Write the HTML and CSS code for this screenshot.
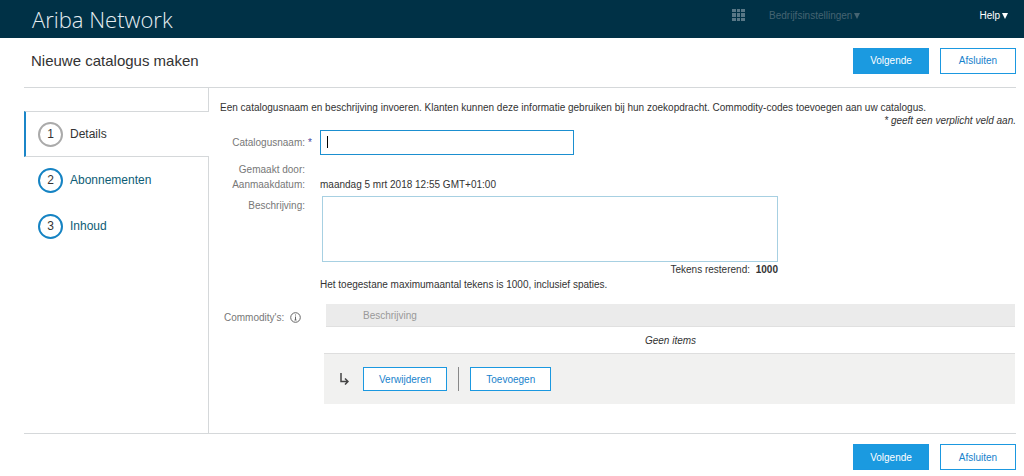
FILE: index.html
```html
<!DOCTYPE html>
<html lang="nl">
<head>
<meta charset="utf-8">
<title>Ariba Network</title>
<link rel="stylesheet" href="styles.css">
</head>
<body>
<header class="topbar">
  <div class="brand">Ariba Network</div>
  <div class="topbar-menu">
    <svg class="grid-icon" viewBox="0 0 13 12" aria-hidden="true"><path d="M0 0h4v3H0zM5 0h3v3H5zM9 0h4v3H9zM0 4h4v4H0zM5 4h3v4H5zM9 4h4v4H9zM0 9h4v3H0zM5 9h3v3H5zM9 9h4v3H9z"/></svg>
    <button class="menu-button menu-muted" type="button">Bedrijfsinstellingen <svg class="caret-icon" viewBox="0 0 6 6" aria-hidden="true"><path d="M0 0h6L3 6z"/></svg></button>
    <button class="menu-button menu-help" type="button">Help <svg class="caret-icon" viewBox="0 0 6 6" aria-hidden="true"><path d="M0 0h6L3 6z"/></svg></button>
  </div>
</header>
<main class="page">
  <div class="title-row">
    <h1 class="title">Nieuwe catalogus maken</h1>
    <div class="actions">
      <button class="btn btn-primary" type="button">Volgende</button>
      <button class="btn" type="button">Afsluiten</button>
    </div>
  </div>
  <div class="body">
    <nav class="steps">
      <div class="steps-top"></div>
      <a class="step step-active" href="#details"><span class="step-number">1</span>Details</a>
      <a class="step" href="#abonnementen"><span class="step-number">2</span>Abonnementen</a>
      <a class="step" href="#inhoud"><span class="step-number">3</span>Inhoud</a>
      <div class="steps-rest"></div>
    </nav>
    <section class="content" id="details">
      <p class="intro">Een catalogusnaam en beschrijving invoeren. Klanten kunnen deze informatie gebruiken bij hun zoekopdracht. Commodity-codes toevoegen aan uw catalogus.</p>
      <p class="required-note">* geeft een verplicht veld aan.</p>
      <div class="form-row name-row">
        <label class="label" for="name">Catalogusnaam:</label>
        <span class="required">*</span>
        <div class="name-field"><input class="name-input" id="name" type="text"><span class="text-cursor"></span></div>
      </div>
      <div class="form-row">
        <span class="label">Gemaakt door:</span>
      </div>
      <div class="form-row">
        <span class="label">Aanmaakdatum:</span>
        <span class="value">maandag 5 mrt 2018 12:55 GMT+01:00</span>
      </div>
      <div class="form-row description-row">
        <label class="label description-label" for="description">Beschrijving:</label>
        <div class="value description">
          <textarea class="description-input" id="description"></textarea>
          <div class="counter">Tekens resterend: <b class="count">1000</b></div>
        </div>
      </div>
      <div class="form-row">
        <span class="value">Het toegestane maximumaantal tekens is 1000, inclusief spaties.</span>
      </div>
      <div class="form-row commodity-row">
        <div class="label commodity-label">Commodity's:
          <svg class="info-icon" viewBox="0 0 11 11" aria-hidden="true"><circle cx="5.5" cy="5.5" r="4.8"/><path d="M5.5 2.5v1M5.5 4.5v3.5M4.5 8h2"/></svg>
        </div>
        <div class="value commodity">
          <table class="table">
            <thead><tr><th>Beschrijving</th></tr></thead>
            <tbody><tr><td>Geen items</td></tr></tbody>
          </table>
          <div class="toolbar">
            <svg class="arrow-icon" viewBox="0 0 9 12" aria-hidden="true"><path d="M1 0v8.5h7M5 5.5l3 3-3 3"/></svg>
            <button class="btn btn-small" type="button">Verwijderen</button>
            <span class="separator"></span>
            <button class="btn btn-small" type="button">Toevoegen</button>
          </div>
        </div>
      </div>
    </section>
  </div>
  <div class="actions footer-actions">
    <button class="btn btn-primary" type="button">Volgende</button>
    <button class="btn" type="button">Afsluiten</button>
  </div>
</main>
</body>
</html>
```
FILE: styles.css
```css
* { box-sizing: border-box; }
body {
  margin: 0;
  background: #fff;
  color: #333;
  font: 10px/15px "Liberation Sans", Arial, sans-serif;
}
p, h1 { margin: 0; font-weight: normal; }
button, input, textarea { font: inherit; border-radius: 0; }

.topbar {
  display: flex;
  justify-content: space-between;
  height: 38px;
  padding: 0 16px 0 32px;
  background: #003146;
}
.brand { color: #e5eef2; font: 300 22px/38px "Open Sans", sans-serif; }
.topbar-menu { display: flex; align-items: flex-start; padding-top: 8px; }
.grid-icon { width: 13px; height: 12px; margin: 1px 24px 0 0; fill: #587786; }
.menu-button {
  display: flex;
  align-items: center;
  gap: 2px;
  padding: 0;
  border: 0;
  background: none;
}
.menu-muted { margin-right: 119px; color: #456472; }
.menu-help { color: #fff; }
.caret-icon { width: 6px; height: 6px; fill: currentColor; }

.page { padding: 0 8px 0 24px; }
.title-row {
  display: flex;
  align-items: center;
  justify-content: space-between;
  height: 50px;
  padding: 0 0 4px 7px;
  border-bottom: 1px solid #d5d8da;
}
.title { font-size: 15px; line-height: 20px; }
.actions { display: flex; gap: 11px; }
.btn {
  min-width: 76px;
  height: 26px;
  padding: 0 15px;
  border: 1px solid #1b98e0;
  background: #fff;
  color: #1782cc;
}
.btn-primary { background: #1b9ae0; color: #fff; }
.btn-small { height: 24px; }
.footer-actions { justify-content: flex-end; padding: 10px 0 6px; }

.body { display: flex; border-bottom: 1px solid #d5d8da; }
.steps { display: flex; flex-direction: column; flex: none; width: 185px; }
.steps-top, .steps-rest { border-right: 1px solid #d5d8da; }
.steps-top { height: 23px; }
.steps-rest { flex: 1; }
.step {
  display: flex;
  align-items: center;
  gap: 7px;
  height: 46px;
  padding-left: 14px;
  border-right: 1px solid #d5d8da;
  color: #0d5c75;
  font-size: 12px;
  text-decoration: none;
}
.step-active {
  padding-left: 12px;
  border: solid #d5d8da;
  border-width: 1px 0;
  border-left: 2px solid #1b86c8;
  color: #333;
}
.step-number {
  width: 25px;
  height: 25px;
  border: 2px solid #1583c3;
  border-radius: 50%;
  color: #333;
  line-height: 21px;
  text-align: center;
}
.step-active .step-number { border-color: #aaa; }

.content { flex: 1; min-width: 0; padding: 12px 0 29px 11px; }
.required-note { line-height: 12px; text-align: right; font-style: italic; }
.form-row { display: grid; grid-template-columns: 85px 15px 1fr; }
.label { grid-column: 1; color: #777; text-align: right; white-space: nowrap; }
.value { grid-column: 3; }
.required { padding-left: 3px; color: #4848a0; }
.name-row { align-items: center; margin: 3px 0 7px; }
.name-field { position: relative; width: 254px; height: 25px; }
.name-input {
  width: 100%;
  height: 100%;
  padding: 0 6px;
  border: 1px solid #1b8fd0;
  outline: 0;
}
.text-cursor { position: absolute; left: 7px; top: 6px; width: 1px; height: 12px; background: #000; }
.description-row { padding-top: 4px; }
.description-label { padding-top: 2px; }
.description { width: 458px; padding-left: 2px; }
.description-input {
  display: block;
  width: 100%;
  height: 66px;
  border: 1px solid #a7d0e2;
  resize: none;
}
.counter { text-align: right; }
.count { margin-left: 3px; }
.commodity-row { padding-top: 12px; }
.commodity-label { display: flex; align-items: center; gap: 6px; height: 27px; padding-left: 4px; }
.info-icon { width: 11px; height: 11px; fill: none; stroke: #666; }
.commodity { padding: 0 1px 0 4px; }
.table { width: 100%; border-spacing: 0; padding-left: 2px; }
.table th {
  height: 23px;
  padding: 0 37px;
  background: #ebebeb;
  border-bottom: 1px solid #e0e0e0;
  color: #999;
  font-weight: normal;
  text-align: left;
}
.table td { height: 26px; padding: 0; font-style: italic; text-align: center; }
.toolbar {
  display: flex;
  align-items: center;
  height: 51px;
  padding-left: 16px;
  border-top: 1px solid #dedede;
  background: #f1f1f0;
}
.arrow-icon { width: 9px; height: 12px; margin-right: 14px; fill: none; stroke: #444; stroke-width: 1.5; }
.separator { width: 1px; height: 24px; margin: 0 11px; background: #888; }
```
